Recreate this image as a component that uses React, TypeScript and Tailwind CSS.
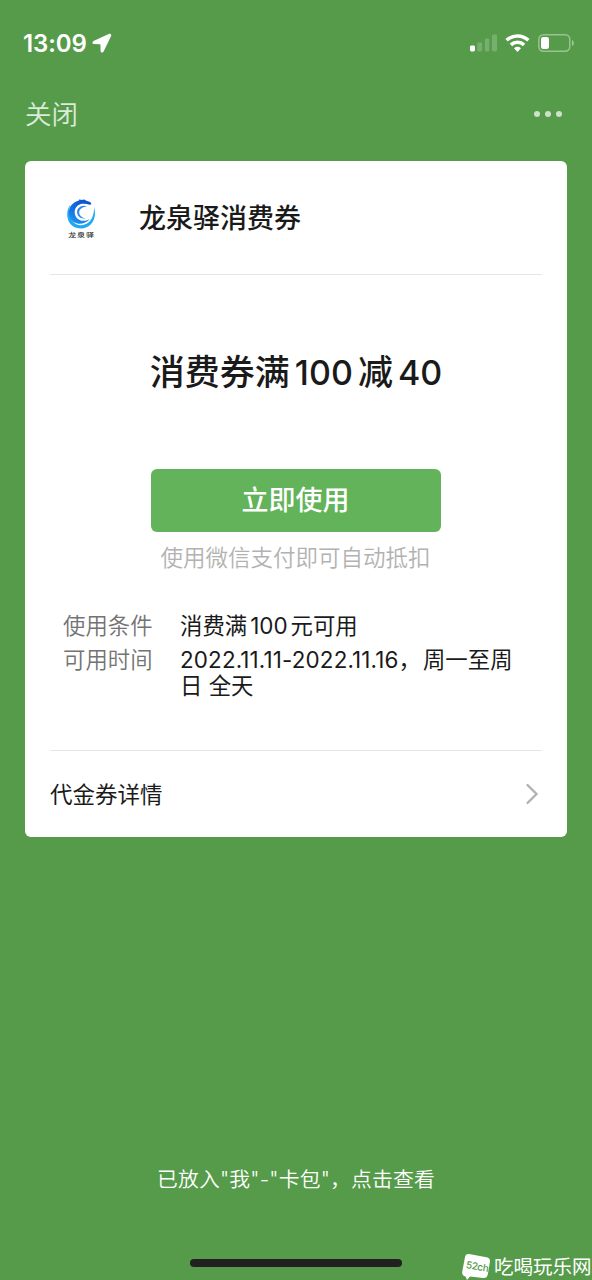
import React from 'react';

const details = [
  {
    label: '使用条件',
    value: (
      <>
        消费满<span className="mx-[3px]">100</span>元可用
      </>
    ),
  },
  {
    label: '可用时间',
    value: (
      <>
        <span className="tracking-[0.15px]">2022.11.11-2022.11.16</span>
        <span className="mr-[2px]">，</span>周一至周
        <br />日 全天
      </>
    ),
  },
];

const StatusBar: React.FC = () => (
  <div className="flex h-[86px] items-center justify-between pl-[23px] pr-[18px] text-white">
    <div className="flex items-center gap-[5px]">
      <span className="w-[64px] whitespace-nowrap pt-px text-[24px] font-semibold leading-[28px] tracking-[-0.1px]">13:09</span>
      <svg width="20" height="20" viewBox="0 0 20 20" fill="currentColor">
        <path d="M16.700.9 1.500 8.100C-.1 8.900.2 11 2 11.100l6.400.1.200 6.700c.1 1.800 2.300 2.200 3 .5L19.100 3.100C19.800 1.500 18.300.2 16.700.9Z" />
      </svg>
    </div>
    <div className="flex items-center">
      {/* Signal */}
      <svg width="28" height="18" viewBox="0 0 28 18" fill="currentColor">
        <rect x="0" y="11.500" width="5" height="6" rx="1.400" />
        <g opacity="0.2">
          <rect x="7.200" y="8.500" width="5" height="9" rx="1.400" />
          <rect x="14.800" y="4.500" width="4.500" height="13" rx="1.400" />
          <rect x="22" y="0.500" width="5" height="17" rx="1.400" />
        </g>
      </svg>
      {/* Wi-Fi */}
      <svg className="ml-[7px] mr-[2px]" width="25" height="18" viewBox="0 0 25 18" fill="none" stroke="currentColor" strokeWidth="3.500">
        <path d="M1.600 6.300a15.800 15.800 0 0 1 21.800 0" />
        <path d="M5.900 10.900a9.800 9.800 0 0 1 13.200 0" />
        <path d="M12.500 17.900 9 14.200a5 5 0 0 1 7 0Z" fill="currentColor" stroke="none" />
      </svg>
      {/* Battery */}
      <svg className="ml-[6px]" width="36" height="18" viewBox="0 0 36 18" fill="none">
        <rect x="0.800" y="0.800" width="31" height="16.400" rx="4.600" stroke="currentColor" strokeWidth="1.500" opacity="0.4" />
        <rect x="3" y="3" width="8" height="12" rx="2.200" fill="currentColor" />
        <path d="M34 6v6c2.400-1 2.400-5 0-6Z" fill="currentColor" opacity="0.45" />
      </svg>
    </div>
  </div>
);

const MerchantLogo: React.FC = () => (
  <div className="flex w-[32px] flex-col items-center">
    <svg width="32" height="34" viewBox="0 0 32 34" fill="none">
      <defs>
        <linearGradient id="wave" x1="22" y1="3" x2="8" y2="28" gradientUnits="userSpaceOnUse">
          <stop stopColor="#0c4fd0" />
          <stop offset="0.5" stopColor="#1270e4" />
          <stop offset="1" stopColor="#1b9bf0" />
        </linearGradient>
      </defs>
      {/* outer ring */}
      <path
        d="M5.500 7.500C-1 16 2 31 15.500 31.500 26.500 31.500 32.500 21 29 10 29.500 20 24.500 28.500 15.800 28.300 6.500 28 1.500 17.500 5.500 7.500Z"
        fill="#20a9f2"
      />
      {/* dragon body */}
      <path
        d="M12.500 4C4.500 6.800 2.300 14.500 4.800 20.500c3.200 7.300 13.700 8.800 20 1.500-5 3.200-11.300 2.200-14-2.600-2.700-5.200-.2-11 5.200-12.400 3-.7 5.800-.2 8.700.8l1.800-.5-1.200-2.300-3.400-.9-2.800-1.600-3 .6-1.600-.9-.5 1.300Z"
        fill="url(#wave)"
      />
      {/* inner crescent */}
      <path d="M22.500 9.300c-6.300-2-10.700 1.500-10.400 6.200.3 4.200 4 6.700 8.300 5.800-4-.8-6.300-3-6.200-6 .1-3.200 3.500-5.500 8.300-6Z" fill="#2f86ec" />
    </svg>
    <span className="h-[7px] whitespace-nowrap pl-px font-['Noto_Sans_CJK_SC',sans-serif] text-[8px] font-medium leading-[7px] tracking-[0.800px] text-[#333] [transform:scaleY(0.7)]">
      龙泉驿
    </span>
  </div>
);

const Watermark: React.FC = () => (
  <div className="absolute bottom-0 left-[461px] flex h-[28px] w-[131px] items-center text-white">
    <div className="relative h-[28px] w-[30px] shrink-0">
      <svg className="absolute inset-0" width="30" height="28" viewBox="0 0 30 28" fill="currentColor">
        <path d="M8 2 25.500 5.300Q29.600 6.200 28.900 10L26.800 22.500Q25.900 26.500 22 26L9 24.600 6 28 4.500 24.500Q.6 23.500 1.300 19.200L4 5Q4.800 1.400 8 2Z" />
      </svg>
      <span className="absolute left-[5px] top-[7px] rotate-[10deg] text-[10px] font-medium leading-[14px] tracking-[-0.4px] text-[#559b4a]">52ch</span>
    </div>
    <span className="ml-[3px] whitespace-nowrap pt-[3px] text-[19.500px] leading-[25px]">吃喝玩乐网</span>
  </div>
);

export default function App() {
  return (
    <div className="relative flex h-[1280px] w-[592px] flex-col overflow-hidden bg-[#559b4a] font-['Inter','Noto_Sans_CJK_SC',sans-serif] text-[#1a1a1a]">
      <StatusBar />

      {/* Nav */}
      <div className="flex h-[75px] items-start justify-between pl-[25px] pr-[30.500px] text-white/80">
        <span className="mt-[9px] text-[26.500px] font-[350] leading-[38px]">关闭</span>
        <div className="mt-[25px] flex gap-[5.500px]">
          <span className="h-[5.500px] w-[5.500px] rounded-full bg-white/70" />
          <span className="h-[5.500px] w-[5.500px] rounded-full bg-white/70" />
          <span className="h-[5.500px] w-[5.500px] rounded-full bg-white/70" />
        </div>
      </div>

      {/* Coupon card */}
      <main className="mx-[25px] flex h-[676px] flex-col rounded-[6px] bg-white px-[25px]">
        <header className="flex h-[114px] items-center border-b border-[#e6e6e6] pl-[15px]">
          <MerchantLogo />
          <h1 className="ml-[42px] pt-[3px] text-[27px] font-medium leading-[36px]">龙泉驿消费券</h1>
        </header>

        <section className="flex h-[476px] flex-col items-center border-b border-[#e6e6e6]">
          <h2 className="mt-[73px] h-[48px] whitespace-nowrap text-[35px] font-medium leading-[48px]">
            消费券满<span className="ml-[5px] mr-[5px] text-[34px]">100</span>减<span className="ml-[5px] text-[34px]">40</span>
          </h2>
          <button className="mt-[73px] h-[63px] w-[290px] rounded-[6px] bg-[#62b35a] pr-px pt-px text-[27px] font-medium leading-[62px] text-white">
            立即使用
          </button>
          <p className="mt-[10px] pr-px text-[22.500px] font-[350] leading-[32px] text-[#b2b2b2]">使用微信支付即可自动抵扣</p>

          <dl className="mt-[39px] flex flex-col gap-[8px] self-stretch pl-[13px] text-[22.400px] leading-[26px]">
            {details.map((item) => (
              <div key={item.label} className="flex">
                <dt className="w-[117px] shrink-0 font-[350] text-[#737373]">{item.label}</dt>
                <dd className="whitespace-nowrap">{item.value}</dd>
              </div>
            ))}
          </dl>
        </section>

        <div className="flex flex-1 items-center justify-between pr-[3px]">
          <span className="pt-[2px] text-[22.500px] leading-[32px]">代金券详情</span>
          <svg width="14" height="22" viewBox="0 0 14 22" fill="none" stroke="#b2b2b2" strokeWidth="2.400" strokeLinecap="round">
            <path d="m2.500 2 9 9-9 9" />
          </svg>
        </div>
      </main>

      <p className="mt-[328px] whitespace-nowrap text-center text-[20.800px] font-[350] leading-[30px] tracking-[0.2px] text-white">
        已放入"我"-"卡包"，点击查看
      </p>
      <div className="mx-auto mt-[64px] h-[8px] w-[212px] rounded-full bg-[#212121]" />

      <Watermark />
    </div>
  );
}
